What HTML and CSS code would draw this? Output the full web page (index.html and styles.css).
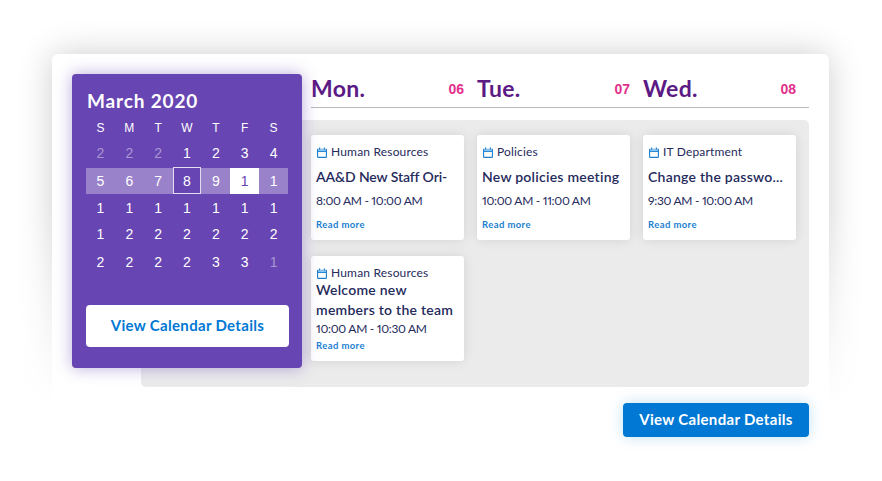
FILE: index.html
```
<!DOCTYPE html>
<html lang="en">
  <head>
    <meta charset="UTF-8" />
    <meta name="viewport" content="width=device-width, initial-scale=1.0" />
    <title>Calendar</title>
    <link rel="stylesheet" href="styles.css">
  </head>
  <body>
    <svg width="0" height="0" class="sprite">
      <symbol id="icon-calendar" viewBox="0 0 10 11">
        <path d="M.5 1.6h9v2.9h-9z" fill="#8cc4ee"/>
        <path d="M.6 2v7.7q0 .7.7.7h7.4q.7 0 .7-.7V2" fill="none" stroke="#1b7fd0" stroke-width="1.1"/>
        <path d="M.6 4.5h8.8" stroke="#1b7fd0" stroke-width=".9"/>
        <path d="M2.6.6v2M7.4.6v2" stroke="#1b7fd0" stroke-width="1.1"/>
      </symbol>
    </svg>

    <div class="panel">
      <div class="content">
        <div class="calendar">
          <h2 class="month">March 2020</h2>
          <div class="days">
            <span class="name">S</span><span class="name">M</span><span class="name">T</span><span class="name">W</span><span class="name">T</span><span class="name">F</span><span class="name">S</span>
            <span class="muted">2</span><span class="muted">2</span><span class="muted">2</span><span>1</span><span>2</span><span>3</span><span>4</span>
            <span class="week">5</span><span class="week">6</span><span class="week">7</span><span class="today">8</span><span class="week">9</span><span class="selected">1</span><span class="week">1</span>
            <span>1</span><span>1</span><span>1</span><span>1</span><span>1</span><span>1</span><span>1</span>
            <span>1</span><span>2</span><span>2</span><span>2</span><span>2</span><span>2</span><span>2</span>
            <span>2</span><span>2</span><span>2</span><span>2</span><span>3</span><span>3</span><span class="muted">1</span>
          </div>
          <button class="btn btn-light">View Calendar Details</button>
        </div>

        <div class="schedule">
          <div class="heading">
            <div class="day"><h3>Mon.</h3><span>06</span></div>
            <div class="day"><h3>Tue.</h3><span>07</span></div>
            <div class="day"><h3>Wed.</h3><span>08</span></div>
          </div>
          <div class="board">
            <div class="card">
              <p class="dept"><svg class="icon"><use href="#icon-calendar"/></svg>Human Resources</p>
              <h4 class="title tight">AA&amp;D New Staff Ori-</h4>
              <p class="time">8:00 AM - 10:00 AM</p>
              <a class="more">Read more</a>
            </div>
            <div class="card">
              <p class="dept"><svg class="icon"><use href="#icon-calendar"/></svg>Policies</p>
              <h4 class="title">New policies meeting</h4>
              <p class="time">10:00 AM - 11:00 AM</p>
              <a class="more">Read more</a>
            </div>
            <div class="card">
              <p class="dept"><svg class="icon"><use href="#icon-calendar"/></svg>IT Department</p>
              <h4 class="title">Change the passwo...</h4>
              <p class="time">9:30 AM - 10:00 AM</p>
              <a class="more">Read more</a>
            </div>
            <div class="card compact">
              <p class="dept"><svg class="icon"><use href="#icon-calendar"/></svg>Human Resources</p>
              <h4 class="title">Welcome new<br>members to the team</h4>
              <p class="time">10:00 AM - 10:30 AM</p>
              <a class="more">Read more</a>
            </div>
          </div>
        </div>
      </div>
      <div class="footer">
        <button class="btn btn-blue">View Calendar Details</button>
      </div>
    </div>
  </body>
</html>
```
FILE: styles.css
```
* {
  box-sizing: border-box;
  margin: 0;
  padding: 0;
}

body {
  height: 481px;
  overflow: hidden;
  background: #fff;
  font-family: Lato, "Open Sans", sans-serif;
  color: #252a5c;
}

.sprite {
  display: block;
}

.panel {
  position: relative;
  z-index: 0;
  width: 777px;
  height: 383px;
  margin: 54px 0 0 52px;
  padding: 20px 20px 0;
}

/* card with a shadow, faded out towards the bottom */
.panel::before {
  content: "";
  position: absolute;
  z-index: -2;
  inset: 0;
  border-radius: 6px;
  background: #fff;
  box-shadow: 0 0 34px rgba(0, 0, 0, 0.2);
}

.panel::after {
  content: "";
  position: absolute;
  z-index: -1;
  inset: 150px -52px -50px;
  background: linear-gradient(rgba(255, 255, 255, 0), #fff 200px);
}

.content {
  display: flex;
  align-items: flex-start;
}

.calendar {
  position: relative;
  z-index: 1;
  flex: none;
  width: 230px;
  height: 294px;
  padding: 13px 13px 0 14px;
  border-radius: 4px;
  background: #6745b2;
  box-shadow: 0 0 16px rgba(103, 69, 178, 0.45);
  color: #fff;
}

.month {
  padding-left: 1px;
  font-size: 19px;
  font-weight: bold;
  line-height: 27px;
  letter-spacing: 0.85px;
}

.days {
  display: grid;
  grid-template-columns: repeat(7, 1fr);
  grid-template-rows: 26px 26px 28px 27px 26px 29px;
  width: 202px;
  font: 14px "Liberation Sans", Arial, sans-serif;
}

.days span {
  display: flex;
  align-items: center;
  justify-content: center;
}

.days .name {
  padding-top: 2px;
  font-size: 12px;
}

.days .muted {
  color: rgba(255, 255, 255, 0.45);
}

.days .week,
.days .selected {
  margin: 2px 0 0;
}

.days .week {
  background: #9a82cb;
}

.days .today {
  margin-top: 1px;
  padding-top: 1px;
  border: 1px solid #e4dcf3;
}

.days .selected {
  background: #fff;
  color: #6745b2;
}

.btn {
  border: 0;
  border-radius: 4px;
  font-family: inherit;
  font-size: 15px;
  font-weight: bold;
  letter-spacing: 0.32px;
}

.btn-light {
  width: 203px;
  height: 42px;
  margin-top: 29px;
  padding-bottom: 2px;
  background: #fff;
  color: #0078d4;
}

.btn-blue {
  width: 186px;
  height: 34px;
  padding-bottom: 2px;
  background: #0078d4;
  box-shadow: 0 0 14px rgba(0, 140, 230, 0.25);
  color: #fff;
}

/* slides under the calendar */
.schedule {
  flex: none;
  width: 668px;
  margin-left: -161px;
}

.heading {
  display: grid;
  grid-template-columns: repeat(3, 153px);
  column-gap: 13px;
  height: 34px;
  margin-left: 170px;
  border-bottom: 1px solid #b9b9b9;
}

.day {
  display: flex;
  align-items: center;
  justify-content: space-between;
  height: 29px;
}

.day h3 {
  font-size: 23px;
  font-weight: bold;
  line-height: 29px;
  letter-spacing: 0.3px;
  color: #5c1a85;
}

.day span {
  font: bold 14px "Liberation Sans", Arial, sans-serif;
  color: #e2308c;
}

.board {
  display: grid;
  grid-template-columns: repeat(3, 153px);
  grid-auto-rows: 105px;
  gap: 16px 13px;
  height: 267px;
  margin-top: 12px;
  padding: 15px 13px 0 170px;
  border-radius: 5px;
  background: #ebebeb;
}

.card {
  padding: 8px 0 0 5px;
  border-radius: 3px;
  background: #fff;
  box-shadow: 0 0 12px rgba(0, 0, 0, 0.1);
  white-space: nowrap;
}

.dept {
  display: flex;
  align-items: center;
  font-size: 12px;
  line-height: 18px;
  letter-spacing: 0.18px;
}

.icon {
  width: 10px;
  height: 11px;
  margin: 0 4px 0 1px;
}

.title {
  margin-top: 6px;
  font-size: 14px;
  font-weight: 600;
  line-height: 20px;
  letter-spacing: 0.25px;
}

.tight {
  letter-spacing: -0.1px;
}

.time {
  margin-top: 6px;
  font-size: 12px;
  font-variant-numeric: proportional-nums;
  line-height: 16px;
  letter-spacing: -0.3px;
}

.more {
  display: block;
  margin-top: 10px;
  font-size: 9.5px;
  font-weight: bold;
  line-height: 12px;
  letter-spacing: 0.4px;
  color: #1b7fd0;
}

.compact .title {
  margin-top: -2px;
}

.compact .time {
  margin-top: 1px;
}

.compact .more {
  margin-top: 3px;
}

.footer {
  display: flex;
  justify-content: flex-end;
  margin-top: 16px;
}
```
